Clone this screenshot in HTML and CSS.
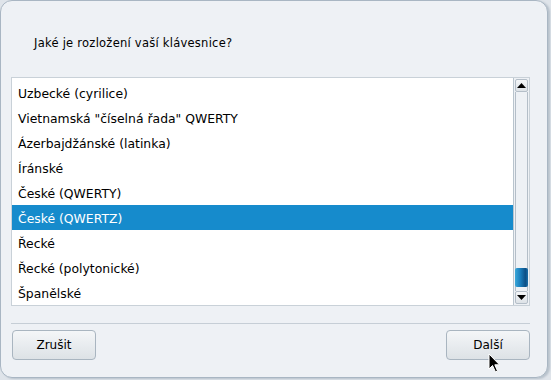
FILE: index.html
```html
<!DOCTYPE HTML><html>
<head>
  <meta name="viewport" content="width=device-width, initial-scale=1">
  <title>Rozložení klávesnice</title>
  <link rel="stylesheet" href="styles.css">
</head>
<body>
  <div class="window">
    <p class="question">Jaké je rozložení vaší klávesnice?</p>
    <div class="listbox">
      <ul class="items">
        <li>Uzbecké (cyrilice)</li>
        <li>Vietnamská "číselná řada" QWERTY</li>
        <li>Ázerbajdžánské (latinka)</li>
        <li>Íránské</li>
        <li>České (QWERTY)</li>
        <li class="selected">České (QWERTZ)</li>
        <li>Řecké</li>
        <li>Řecké (polytonické)</li>
        <li>Španělské</li>
      </ul>
      <div class="scrollbar">
        <div class="arrow"><svg width="9" height="5" viewBox="0 0 9 5"><path d="M0 5 L4.5 0 L9 5 Z" fill="#000"/></svg></div>
        <div class="track"><div class="thumb"></div></div>
        <div class="arrow"><svg width="9" height="5" viewBox="0 0 9 5"><path d="M0 0 L4.5 5 L9 0 Z" fill="#000"/></svg></div>
      </div>
    </div>
    <div class="separator"></div>
    <div class="buttons">
      <button class="button">Zrušit</button>
      <button class="button">Další</button>
    </div>
    <svg class="cursor" width="14" height="20" viewBox="0 0 14 20"><path d="M1 1 L1 16 L4.5 12.5 L7.5 19 L9.5 18 L6.8 11.8 L11.5 11.8 Z" fill="#000" stroke="#fff" stroke-width="1"/></svg>
  </div>
</body>
</html>
```

FILE: styles.css
```css
html, body {margin: 0; padding: 0; background: #dfe4ea;}
body {width: 551px; height: 380px; overflow: hidden; font-family: "DejaVu Sans", sans-serif; font-size: 12px; color: #000;}
.window {position: relative; box-sizing: border-box; width: 548px; height: 378px; background: #eef1f5;
  border: 1px solid #a9b6c3; border-radius: 12px 12px 12px 12px; box-shadow: 2px 1px 2px #b8c2cc;
  padding: 0 17px 0 10px; display: flex; flex-direction: column;}
.question {margin: 35px 0 0 23px; line-height: 15px; height: 15px; font-size: 11.5px; letter-spacing: 0.25px;}
.listbox {margin-top: 26px; height: 229px; box-sizing: border-box; border: 1px solid #c9d1d8; background: #fff; display: flex;}
.items {list-style: none; margin: 0; padding: 2px 0 0 0; flex: 1;}
.items li {height: 25px; box-sizing: border-box; padding-top: 1px; line-height: 25px; padding-left: 6px; white-space: nowrap; font-size: 12.4px;}
.items li.selected {background: #168bcc; color: #fff;}
.scrollbar {width: 16px; box-sizing: border-box; border-left: 1px solid #b9c4cd; background: #eef1f5; display: flex; flex-direction: column; padding: 1px 1px 1px 1px;}
.arrow {height: 13px; box-sizing: border-box; border: 1px solid #b4bec8; border-radius: 2px; background: linear-gradient(#f4f6f8, #dde2e7); display: flex; align-items: center; justify-content: center;}
.track {flex: 1; border-left: 1px solid #b4bec8; border-right: 1px solid #b4bec8; display: flex; flex-direction: column; justify-content: flex-end; padding-bottom: 4px;}
.thumb {height: 19px; margin: 0 -1px; border-radius: 2px; background: linear-gradient(to right, #3aa7d8, #1a7fbe 40%, #0c4f86 80%, #1a6ea8);}
.separator {margin-top: 17px; height: 1px; background: #c6ced6;}
.buttons {display: flex; justify-content: space-between; margin-top: 6px; padding: 0 0 0 1px;}
.button {width: 84px; height: 30px; box-sizing: border-box; border: 1px solid #a9b5c0; border-radius: 4px;
  background: linear-gradient(#f4f6f8, #dde2e6); font-family: "DejaVu Sans", sans-serif; font-size: 12px; color: #000; padding: 0;}
.cursor {position: absolute; left: 487px; top: 352px;}
```
